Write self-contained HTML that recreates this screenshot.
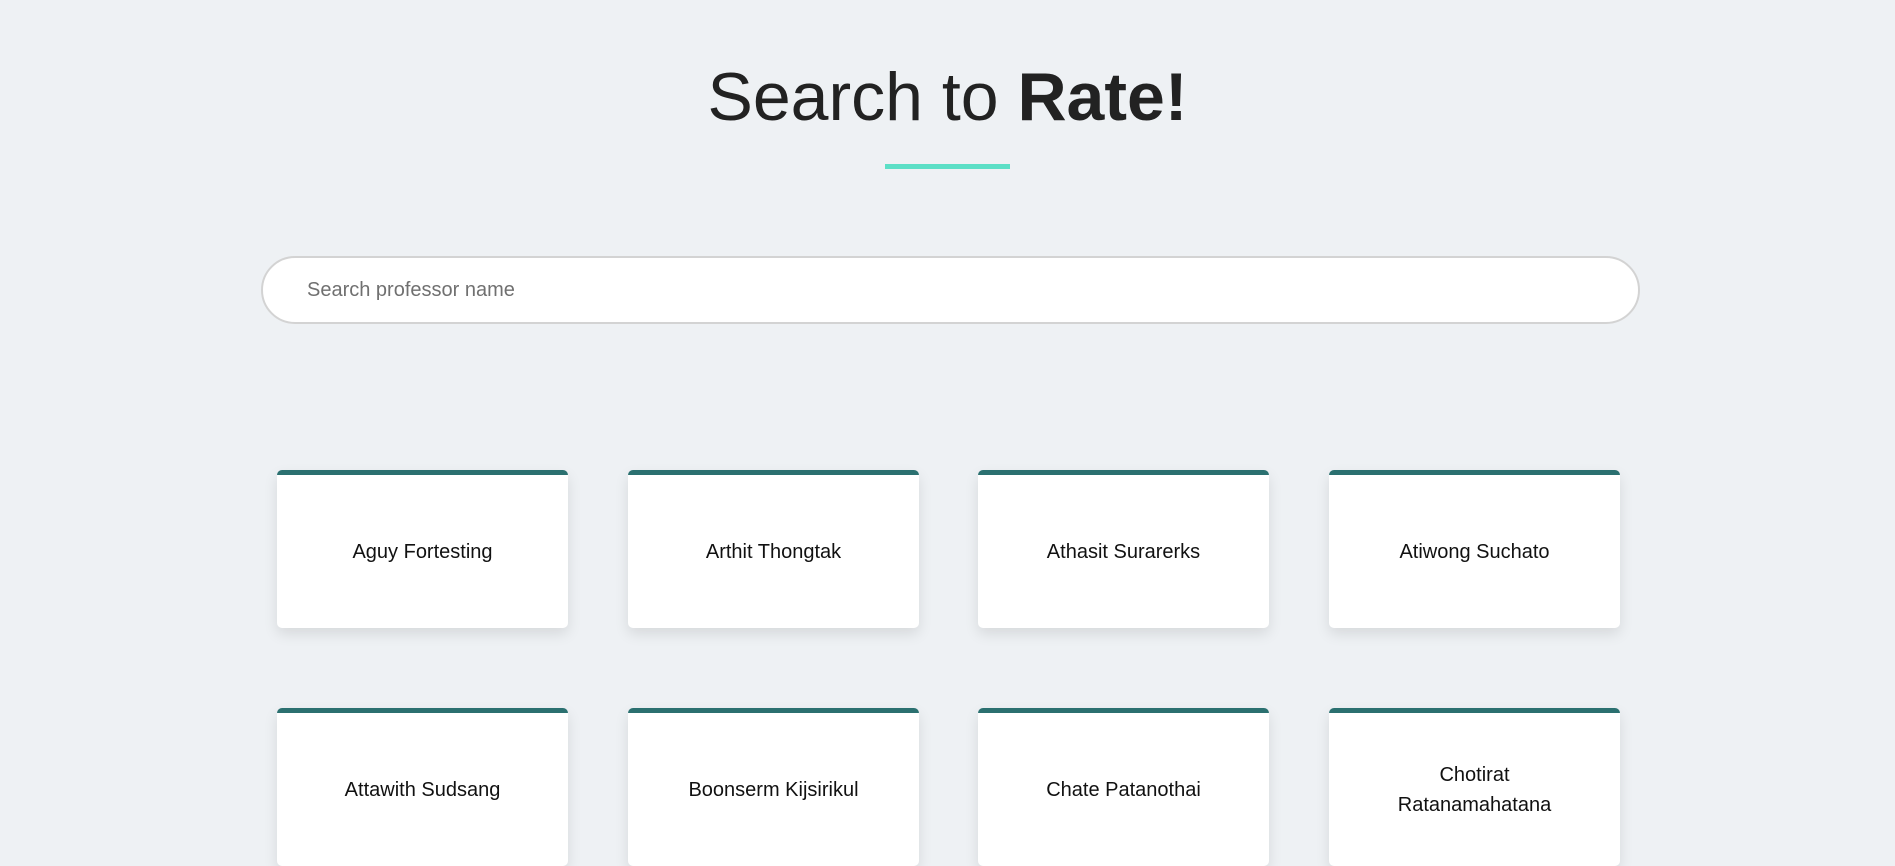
<!DOCTYPE html>
<html><head><meta charset="utf-8"><style>
*{box-sizing:border-box;margin:0;padding:0}
body{width:1895px;height:862px;overflow:hidden;background:#eef1f4;font-family:"Liberation Sans",sans-serif;position:relative}
h1{position:absolute;top:58px;left:0;width:100%;text-align:center;font-size:68px;font-weight:400;color:#222;letter-spacing:0}
h1 b{font-weight:700}
.line{position:absolute;left:885px;top:164px;width:125px;height:5px;background:#5cdfc6}
.search{position:absolute;left:261px;top:256px;width:1379px;height:68px;border:2px solid #d3d3d3;border-radius:34px;background:#fff;font-size:20px;color:#707070;padding-left:44px;line-height:64px}
.card{position:absolute;width:291px;height:158px;background:#fff;border-top:5px solid #2b7070;border-radius:5px;box-shadow:0 6px 14px rgba(0,0,0,.1);display:flex;align-items:center;justify-content:center;text-align:center;font-size:20px;color:#111;line-height:30px;padding:0 20px}
</style></head><body>
<h1>Search to <b>Rate!</b></h1>
<div class="line"></div>
<div class="search">Search professor name</div>
<div class="card" style="left:277px;top:470px">Aguy Fortesting</div>
<div class="card" style="left:628px;top:470px">Arthit Thongtak</div>
<div class="card" style="left:978px;top:470px">Athasit Surarerks</div>
<div class="card" style="left:1329px;top:470px">Atiwong Suchato</div>
<div class="card" style="left:277px;top:708px">Attawith Sudsang</div>
<div class="card" style="left:628px;top:708px">Boonserm Kijsirikul</div>
<div class="card" style="left:978px;top:708px">Chate Patanothai</div>
<div class="card" style="left:1329px;top:708px">Chotirat<br>Ratanamahatana</div>
</body></html>
